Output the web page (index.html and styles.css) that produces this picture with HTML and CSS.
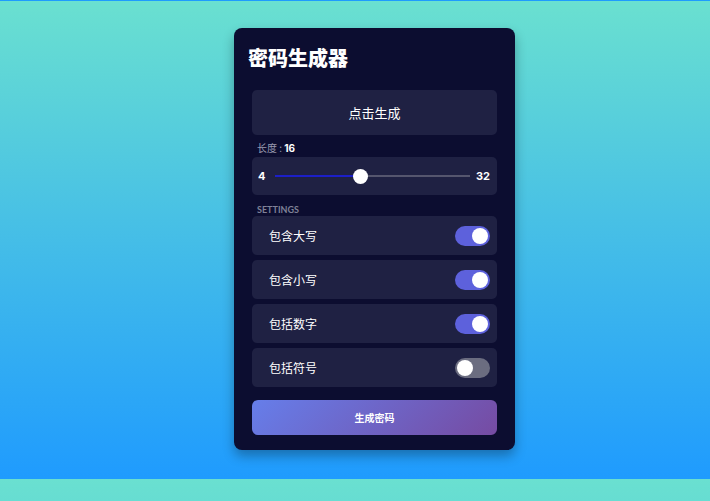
FILE: index.html
```html
<!DOCTYPE html>
<html lang="zh">
<head>
<meta charset="utf-8">
<title>密码生成器</title>
<link rel="stylesheet" href="styles.css">
</head>
<body>
<div class="card">
  <h2 class="title">密码生成器</h2>
  <div class="content">
    <div class="result">点击生成</div>
    <div class="label">长度 : <b>16</b></div>
    <div class="slider-box">
      <span class="num">4</span>
      <div class="track"><div class="fill" style="width:43.5%"></div><div class="thumb" style="left:43.5%"></div></div>
      <span class="num">32</span>
    </div>
    <div class="label caps">SETTINGS</div>
    <div class="settings">
      <div class="row"><span>包含大写</span><span class="toggle on"></span></div>
      <div class="row"><span>包含小写</span><span class="toggle on"></span></div>
      <div class="row"><span>包括数字</span><span class="toggle on"></span></div>
      <div class="row"><span>包括符号</span><span class="toggle"></span></div>
    </div>
    <button class="generate">生成密码</button>
  </div>
</div>
</body>
</html>
```
FILE: styles.css
```css
html {
  background: linear-gradient(180deg, #6ae0d0 0%, #1f9bfe 100%);
  background-position: 0 1px;
}
body {
  margin: 0;
  padding: 28px 0;
  font-family: "Inter", "Noto Sans CJK SC", sans-serif;
  color: #fff;
}
.card {
  box-sizing: border-box;
  width: 281px;
  margin-left: 234px;
  background: #0c0d30;
  border-radius: 8px;
  padding: 17px 14px 15px;
  box-shadow: 0 6px 12px rgba(0, 0, 0, 0.3);
}
.title {
  margin: 0 0 19px;
  font-size: 20px;
  line-height: 26px;
  font-weight: 900;
  font-family: "Noto Sans CJK SC", sans-serif;
}
.content {
  padding: 0 4px;
}
.result {
  height: 45px;
  background: #1f2143;
  border-radius: 5px;
  display: flex;
  align-items: center;
  justify-content: center;
  font-size: 13px;
  font-family: "Noto Sans CJK SC", sans-serif;
}
.label {
  margin: 7px 0 3px 5px;
  font-size: 10px;
  line-height: 12px;
  color: #9a9bb0;
  font-family: "Noto Sans CJK SC", sans-serif;
}
.label b {
  color: #fff;
  font-family: "Inter", sans-serif;
  font-weight: 700;
}
.label.caps {
  margin-top: 9px;
  margin-bottom: 1px;
  font-family: "Lato", sans-serif;
  font-weight: 700;
  font-size: 9px;
  line-height: 11px;
  color: #7f8197;
}
.slider-box {
  height: 38px;
  background: #1f2143;
  border-radius: 5px;
  display: flex;
  align-items: center;
  padding: 0 7px 0 6px;
}
.num {
  font-weight: 700;
  font-size: 11px;
}
.track {
  flex: 1;
  height: 2px;
  margin: 0 6px 0 10px;
  background: #55566e;
  position: relative;
}
.fill {
  height: 100%;
  background: #1c1fc8;
}
.thumb {
  position: absolute;
  top: 50%;
  width: 15px;
  height: 15px;
  margin: -7.5px 0 0 -7.5px;
  border-radius: 50%;
  background: #fff;
}
.settings {
  display: flex;
  flex-direction: column;
  gap: 5px;
}
.row {
  height: 39px;
  background: #1f2143;
  border-radius: 5px;
  display: flex;
  align-items: center;
  justify-content: space-between;
  padding: 0 7px 0 17px;
  font-size: 12px;
  font-family: "Noto Sans CJK SC", sans-serif;
}
.toggle {
  box-sizing: border-box;
  width: 35px;
  height: 20px;
  border-radius: 10px;
  background: #6b6d80;
  padding: 2px;
  display: flex;
}
.toggle::after {
  content: "";
  width: 16px;
  height: 16px;
  border-radius: 50%;
  background: #fff;
}
.toggle.on {
  background: #5d61dc;
  justify-content: flex-end;
}
.generate {
  display: block;
  width: 100%;
  height: 35px;
  margin-top: 13px;
  border: none;
  border-radius: 6px;
  background: linear-gradient(135deg, #667eea, #764ba2);
  color: #fff;
  font-size: 10px;
  font-weight: 700;
  font-family: "Noto Sans CJK SC", sans-serif;
}
```
